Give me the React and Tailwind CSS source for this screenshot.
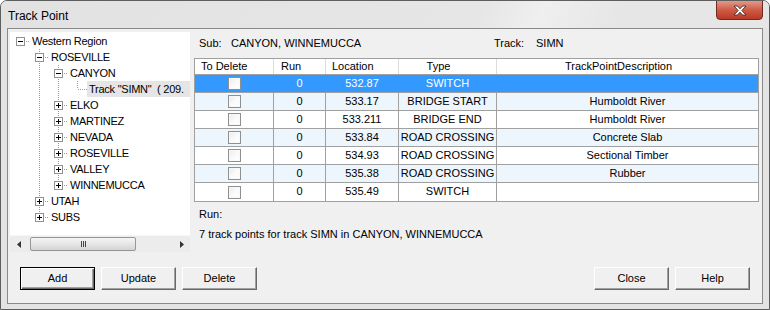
import React from 'react';

const TREE = [
  { label: 'Western Region', level: 0, box: '-', guides: [], root: true },
  { label: 'ROSEVILLE', level: 1, box: '-', guides: [false] },
  { label: 'CANYON', level: 2, box: '-', guides: [false, true] },
  { label: 'Track "SIMN"  ( 209.', level: 3, box: null, guides: [false, true, true], last: true, selected: true },
  { label: 'ELKO', level: 2, box: '+', guides: [false, true] },
  { label: 'MARTINEZ', level: 2, box: '+', guides: [false, true] },
  { label: 'NEVADA', level: 2, box: '+', guides: [false, true] },
  { label: 'ROSEVILLE', level: 2, box: '+', guides: [false, true] },
  { label: 'VALLEY', level: 2, box: '+', guides: [false, true] },
  { label: 'WINNEMUCCA', level: 2, box: '+', guides: [false, true], last: true },
  { label: 'UTAH', level: 1, box: '+', guides: [false] },
  { label: 'SUBS', level: 1, box: '+', guides: [false], last: true },
];

const ROWS = [
  { loc: '532.87', type: 'SWITCH', desc: '', sel: true },
  { loc: '533.17', type: 'BRIDGE START', desc: 'Humboldt River' },
  { loc: '533.211', type: 'BRIDGE END', desc: 'Humboldt River' },
  { loc: '533.84', type: 'ROAD CROSSING', desc: 'Concrete Slab' },
  { loc: '534.93', type: 'ROAD CROSSING', desc: 'Sectional Timber' },
  { loc: '535.38', type: 'ROAD CROSSING', desc: 'Rubber' },
  { loc: '535.49', type: 'SWITCH', desc: '' },
];

const DOT = { stroke: '#9a9a9a', strokeWidth: 1, strokeDasharray: '1 1' };

function Guide({ line }) {
  return (
    <svg width="19" height="16" className="shrink-0">
      {line && <line x1="9.5" y1="0" x2="9.5" y2="16" {...DOT} />}
    </svg>
  );
}

function NodeCell({ node }) {
  return (
    <svg width="19" height="16" className="shrink-0">
      {!node.root && <line x1="9.5" y1="0" x2="9.5" y2={node.last ? 8 : 16} {...DOT} />}
      <line x1={node.box ? 15 : 10} y1="8.5" x2="19" y2="8.5" {...DOT} />
      {node.box && (
        <g>
          <rect x="5.5" y="4.5" width="8" height="8" fill="#fff" stroke="#919191" />
          <line x1="7" y1="8.5" x2="12" y2="8.5" stroke="#000" />
          {node.box === '+' && <line x1="9.5" y1="6" x2="9.5" y2="11" stroke="#000" />}
        </g>
      )}
    </svg>
  );
}

function TreeRow({ node }) {
  return (
    <div className="flex h-[16px] pl-[1px] items-stretch">
      {node.guides.map((g, i) => <Guide key={i} line={g} />)}
      <NodeCell node={node} />
      <span
        className={`px-[2px] leading-[16px] whitespace-pre tracking-[-0.25px] ${node.selected ? 'bg-[#e5e5e5] flex-1' : ''}`}
      >
        {node.label}
      </span>
    </div>
  );
}

function ScrollBar() {
  return (
    <div className="h-[17px] flex items-center bg-[#ececec] border-t border-[#f6f6f6]">
      <div className="w-[17px] flex justify-center">
        <svg width="4" height="7"><path d="M4 0 L0 3.5 L4 7 Z" fill="#333" /></svg>
      </div>
      <div className="ml-[3px] w-[106px] h-[14px] rounded-[2px] border border-[#979797] bg-gradient-to-b from-[#f4f4f4] via-[#e6e6e6] to-[#d3d3d3] flex items-center justify-center gap-[1px]">
        <div className="w-[1px] h-[6px] bg-[#444]" />
        <div className="w-[1px] h-[6px] bg-[#444]" />
        <div className="w-[1px] h-[6px] bg-[#444]" />
      </div>
      <div className="flex-1" />
      <div className="w-[17px] flex justify-center">
        <svg width="4" height="7"><path d="M0 0 L4 3.5 L0 7 Z" fill="#333" /></svg>
      </div>
    </div>
  );
}

function CheckBox() {
  return (
    <div className="w-[13px] h-[13px] border border-[#8e8f8f] bg-gradient-to-br from-[#e9e9e9] via-[#fafafa] to-white shadow-[inset_0_0_0_1px_#f8f8f8]" />
  );
}

function Btn({ label, primary }) {
  return (
    <button
      type="button"
      className={`w-[75px] h-[23px] bg-[#f0f0f0] text-black leading-none ${
        primary
          ? 'border border-black shadow-[inset_1px_1px_0_#fff,inset_-1px_-1px_0_#696969,inset_-2px_-2px_0_#a0a0a0]'
          : 'border border-t-white border-l-white border-r-[#696969] border-b-[#696969] shadow-[inset_-1px_-1px_0_#a0a0a0]'
      }`}
    >
      {label}
    </button>
  );
}

export default function App() {
  return (
    <div className="w-[770px] h-[310px] bg-[#e3e3e3] border border-[#5e5e5e] rounded-t-[7px] overflow-hidden text-[11px] text-black font-['Liberation_Sans',Arial,sans-serif]">
      {/* title bar */}
      <div className="h-[27px] relative bg-[linear-gradient(115deg,#e2e2e2_0%,#e6e6e6_62%,#efefef_70%,#e6e6e6_80%)]">
        <span className="absolute left-[7px] top-[6px] text-[12px]">Track Point</span>
        <div className="absolute right-[6px] top-[-1px] w-[47px] h-[20px] rounded-b-[4px] border border-[#6b2c22] bg-gradient-to-b from-[#e09a8a] via-[#cf5a44] to-[#b93a27] flex items-center justify-center">
          <svg width="14" height="11" viewBox="0 0 14 11">
            <path
              d="M1 1 H4.5 L7 3.8 L9.5 1 H13 L8.8 5.5 L13 10 H9.5 L7 7.2 L4.5 10 H1 L5.2 5.5 Z"
              fill="#fff"
              stroke="#4a2a24"
              strokeWidth="0.9"
              strokeLinejoin="round"
            />
          </svg>
        </div>
      </div>

      {/* client area */}
      <div className="ml-[6px] w-[756px] h-[276px] border border-[#8a8a8a] bg-[#f0f0f0] flex flex-col">
        <div className="flex pt-[3px] pl-[2px]">
          {/* tree */}
          <div className="w-[180px] h-[220px] flex flex-col bg-white overflow-hidden">
            <div className="flex-1 pt-[1px] overflow-hidden">
              {TREE.map((n, i) => <TreeRow key={i} node={n} />)}
            </div>
            <ScrollBar />
          </div>

          {/* details */}
          <div className="ml-[4px] w-[565px] flex flex-col">
            <div className="h-[26px] pt-[4px] pl-[5px] flex leading-[14px]">
              <span className="w-[32px]">Sub:</span>
              <span className="w-[263px]">CANYON, WINNEMUCCA</span>
              <span className="w-[42px]">Track:</span>
              <span>SIMN</span>
            </div>

            <div className="border border-[#a0a0a0] bg-white">
              <div className="flex h-[16px] border-b border-[#a0a0a0] leading-[15px] bg-white">
                <div className="w-[79px] border-r border-[#dcdcdc] pl-[6px]">To Delete</div>
                <div className="w-[52px] border-r border-[#dcdcdc] pl-[7px]">Run</div>
                <div className="w-[73px] border-r border-[#dcdcdc] pl-[6px]">Location</div>
                <div className="w-[98px] border-r border-[#dcdcdc] text-center pr-[18px]">Type</div>
                <div className="flex-1 text-center pr-[18px]">TrackPointDescription</div>
              </div>
              {ROWS.map((r, i) => {
                const bg = r.sel ? 'bg-[#3399ff] text-white' : i % 2 === 1 ? 'bg-[#edf5fd]' : 'bg-white';
                const sep = r.sel ? 'border-[#3399ff]' : 'border-[#a0a0a0]';
                return (
                  <div
                    key={i}
                    className={`flex h-[18px] leading-[17px] text-center ${bg} ${i < ROWS.length - 1 ? 'border-b border-[#a0a0a0]' : ''}`}
                  >
                    <div className={`w-[79px] border-r ${sep} flex items-center justify-center`}>
                      <CheckBox />
                    </div>
                    <div className={`w-[52px] border-r ${sep}`}>0</div>
                    <div className={`w-[73px] border-r ${sep}`}>{r.loc}</div>
                    <div className={`w-[98px] border-r ${sep}`}>{r.type}</div>
                    <div className="flex-1">{r.desc}</div>
                  </div>
                );
              })}
            </div>

            <div className="mt-[5px] pl-[5px] leading-[14px]">Run:</div>
            <div className="mt-[6px] pl-[5px] leading-[14px]">7 track points for track SIMN in CANYON, WINNEMUCCA</div>
          </div>
        </div>

        {/* buttons */}
        <div className="mt-[15px] flex justify-between pl-[12px] pr-[12px]">
          <div className="flex gap-[6px]">
            <Btn label="Add" primary />
            <Btn label="Update" />
            <Btn label="Delete" />
          </div>
          <div className="flex gap-[6px]">
            <Btn label="Close" />
            <Btn label="Help" />
          </div>
        </div>
      </div>
    </div>
  );
}
